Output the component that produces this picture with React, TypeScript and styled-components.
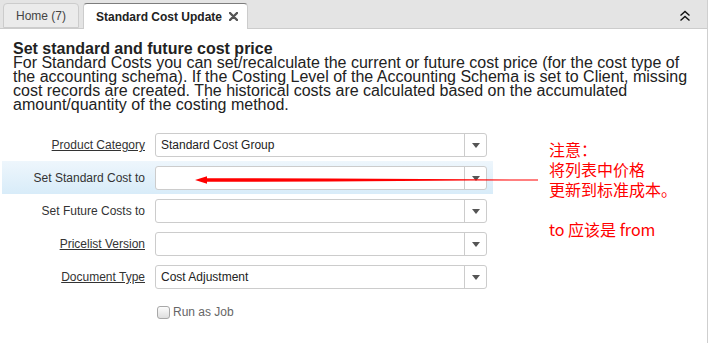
import React from "react";
import styled, { createGlobalStyle } from "styled-components";

const Global = createGlobalStyle`
  html, body { margin: 0; padding: 0; background: #fff; }
  body { font-family: "Liberation Sans", Arial, sans-serif; }
`;

const Page = styled.div`
  position: relative;
  width: 708px;
  height: 343px;
  border-right: 1px solid #cfcfcf;
  box-sizing: border-box;
  overflow: hidden;
`;

const TabBar = styled.div`
  height: 29px;
  box-sizing: border-box;
  background: #e4e4e4;
  border-bottom: 1px solid #cccccc;
  display: flex;
  align-items: flex-end;
  padding-left: 3px;
  gap: 4px;
`;

const Tab = styled.div<{ $active?: boolean }>`
  flex: none;
  height: ${(p) => (p.$active ? 26 : 25)}px;
  box-sizing: border-box;
  margin-bottom: ${(p) => (p.$active ? -1 : 0)}px;
  display: flex;
  align-items: center;
  justify-content: space-between;
  white-space: nowrap;
  padding: 0 ${(p) => (p.$active ? 9 : 0)}px 0 12px;
  border: 1px solid #cccccc;
  border-top-color: ${(p) => (p.$active ? "#7d7d7d" : "#cccccc")};
  border-bottom: ${(p) => (p.$active ? "none" : "1px solid #cccccc")};
  border-radius: 4px 4px 0 0;
  background: ${(p) => (p.$active ? "#ffffff" : "#ebebeb")};
  color: ${(p) => (p.$active ? "#222" : "#444")};
  font-size: 12px;
  font-weight: ${(p) => (p.$active ? "bold" : "normal")};
  width: ${(p) => (p.$active ? 165 : 76)}px;
`;

const Spacer = styled.div`
  flex: 1;
`;

const Collapse = styled.div`
  width: 26px;
  height: 28px;
  display: flex;
  align-items: center;
  justify-content: center;
  margin-right: 9px;
  padding-top: 4px;
  box-sizing: border-box;
`;

const Intro = styled.div`
  padding: 12.5px 0 0 13px;
  font-size: 16px;
  line-height: 14px;
  color: #222;
  white-space: nowrap;
`;

const Title = styled.div`
  font-weight: bold;
`;

const FormArea = styled.div`
  display: flex;
  margin-top: 16.5px;
  padding-left: 2px;
`;

const Form = styled.div`
  width: 491px;
  display: flex;
  flex-direction: column;
`;

const Row = styled.div<{ $highlight?: boolean }>`
  height: 33px;
  display: flex;
  align-items: flex-start;
  padding-top: 5px;
  box-sizing: border-box;
  background: ${(p) =>
    p.$highlight ? "linear-gradient(#eef6fc, #d8ecf9)" : "transparent"};
`;

const Label = styled.div<{ $link?: boolean }>`
  width: 143px;
  height: 24px;
  line-height: 24px;
  text-align: right;
  font-size: 12px;
  color: #333;
  text-decoration: ${(p) => (p.$link ? "underline" : "none")};
  margin-right: 10px;
`;

const Select = styled.div`
  width: 332px;
  height: 24px;
  box-sizing: border-box;
  border: 1px solid #cccccc;
  border-radius: 3px;
  background: #fff;
  display: flex;
  align-items: stretch;
`;

const Value = styled.div`
  flex: 1;
  padding-left: 5px;
  font-size: 12px;
  line-height: 22px;
  color: #222;
`;

const DropButton = styled.div`
  width: 21px;
  border-left: 1px solid #cccccc;
  display: flex;
  align-items: center;
  justify-content: center;
`;

const Caret = styled.span`
  width: 0;
  height: 0;
  border-left: 4.5px solid transparent;
  border-right: 4.5px solid transparent;
  border-top: 5px solid #555;
  margin-top: 1px;
`;

const CheckRow = styled.div`
  display: flex;
  align-items: center;
  gap: 3px;
  padding-left: 155px;
  margin-top: 12px;
  font-size: 12px;
  color: #666;
`;

const CheckBox = styled.span`
  width: 13px;
  height: 13px;
  box-sizing: border-box;
  border: 1px solid #a8a8a8;
  border-radius: 3px;
  background: linear-gradient(#fcfcfc, #dedede);
`;

const Note = styled.div`
  margin-left: 56px;
  margin-top: 11px;
  font-family: "Noto Sans CJK SC", "Liberation Sans", sans-serif;
  font-size: 16px;
  line-height: 20px;
  color: #ff0000;
  white-space: pre;
`;

const ArrowLayer = styled.svg`
  position: absolute;
  left: 0;
  top: 0;
  pointer-events: none;
`;

const fields = [
  { label: "Product Category", link: true, value: "Standard Cost Group" },
  { label: "Set Standard Cost to", highlight: true, value: "" },
  { label: "Set Future Costs to", value: "" },
  { label: "Pricelist Version", link: true, value: "" },
  { label: "Document Type", link: true, value: "Cost Adjustment" },
];

export default function App() {
  return (
    <Page>
      <Global />
      <TabBar>
        <Tab>Home (7)</Tab>
        <Tab $active>
          Standard Cost Update
          <svg width="9" height="9" viewBox="0 0 9 9">
            <path d="M1 1 L8 8 M8 1 L1 8" stroke="#555" strokeWidth="2.4" strokeLinecap="round" />
          </svg>
        </Tab>
        <Spacer />
        <Collapse>
          <svg width="12" height="12" viewBox="0 0 12 12">
            <path d="M1.5 5.5 L6 1.5 L10.5 5.5 M1.5 10.5 L6 6.5 L10.5 10.5" fill="none" stroke="#111" strokeWidth="1.4" />
          </svg>
        </Collapse>
      </TabBar>
      <Intro>
        <Title>Set standard and future cost price</Title>
        For Standard Costs you can set/recalculate the current or future cost price (for the cost type of
        <br />
        the accounting schema). If the Costing Level of the Accounting Schema is set to Client, missing
        <br />
        cost records are created. The historical costs are calculated based on the accumulated
        <br />
        amount/quantity of the costing method.
      </Intro>
      <FormArea>
        <Form>
          {fields.map((f) => (
            <Row key={f.label} $highlight={f.highlight}>
              <Label $link={f.link}>{f.label}</Label>
              <Select>
                <Value>{f.value}</Value>
                <DropButton>
                  <Caret />
                </DropButton>
              </Select>
            </Row>
          ))}
          <CheckRow>
            <CheckBox />
            Run as Job
          </CheckRow>
        </Form>
        <Note>{"注意：\n将列表中价格\n更新到标准成本。\n\nto 应该是 from"}</Note>
      </FormArea>
      <ArrowLayer width="709" height="343" viewBox="0 0 709 343">
        <polygon points="206,178.2 330,178.6 470,179.2 538,179.6 538,180.5 470,180.6 330,181.4 206,181.8" fill="#ff0000" />
        <polygon points="195,180 207,176.3 207,183.7" fill="#ff0000" />
      </ArrowLayer>
    </Page>
  );
}
